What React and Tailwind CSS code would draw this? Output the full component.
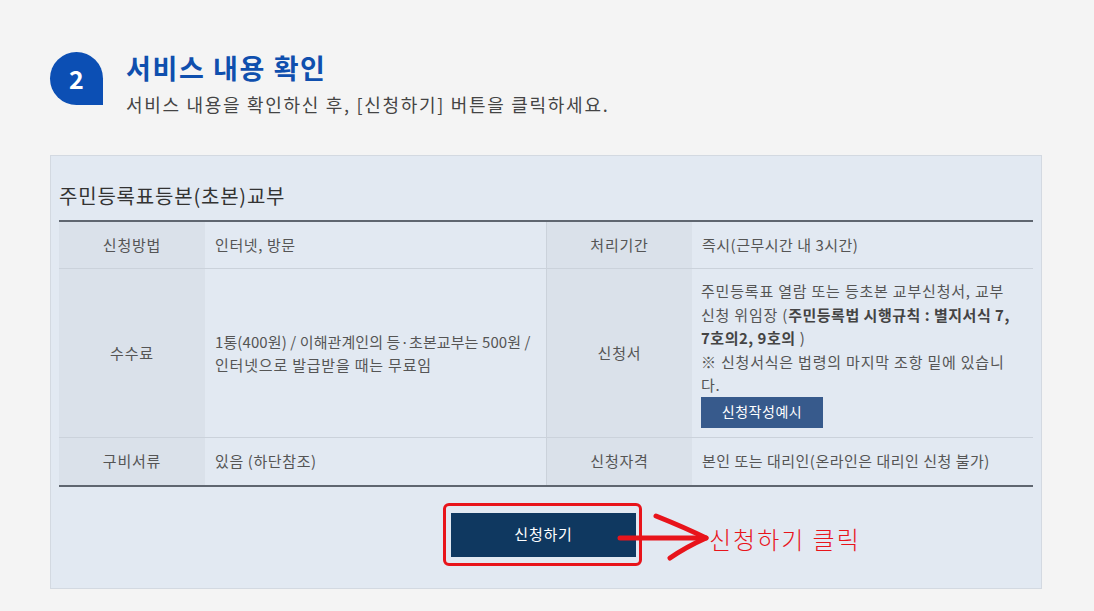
import React from "react";

const KR = { fontFamily: '"Noto Sans CJK KR", "Noto Sans", sans-serif' };

const Label = ({ children, className = "" }) => (
  <div className={`flex items-center justify-center bg-[#dae1ea] text-[15px] tracking-[0.8px] text-[#555] ${className}`}>
    {children}
  </div>
);

const Value = ({ children, className = "" }) => (
  <div className={`flex items-center px-[10px] text-[15px] text-[#555] ${className}`}>
    {children}
  </div>
);

export default function App() {
  return (
    <div className="min-h-[611px] w-full bg-[#f4f4f4] pt-[51px] pl-[50px]" style={KR}>
      {/* step header */}
      <div className="flex items-start">
        <div className="mt-[1px] flex h-[53px] w-[53px] items-center justify-center rounded-tl-[27px] rounded-tr-[27px] rounded-bl-[27px] bg-[#0c4fb4] text-[25px] font-bold text-white">
          2
        </div>
        <div className="ml-[23px]">
          <div className="text-[27px] font-bold leading-[34px] tracking-[1.6px] text-[#0f4fae]">서비스 내용 확인</div>
          <div className="mt-[7px] text-[18px] leading-[24px] tracking-[1.7px] text-[#444]">
            서비스 내용을 확인하신 후, [신청하기] 버튼을 클릭하세요.
          </div>
        </div>
      </div>

      {/* service card */}
      <div className="mt-[39px] w-[992px] border border-[#d3d9e1] bg-[#e2e9f2] px-[8px] pt-[26px] pb-[31px]">
        <div className="mb-[10px] text-[20px] leading-[28px] tracking-[0.8px] text-[#333]">주민등록표등본(초본)교부</div>

        <div className="grid grid-cols-[146px_342px_145px_341px] border-t-2 border-b-2 border-[#5f6670]">
          {/* row 1 */}
          <Label className="h-[47px] border-b border-[#cbd2db]">신청방법</Label>
          <Value className="border-b border-r border-[#cbd2db] tracking-[0.6px]">인터넷, 방문</Value>
          <Label className="border-b border-[#cbd2db]">처리기간</Label>
          <Value className="border-b border-[#cbd2db] tracking-[0.5px]">즉시(근무시간 내 3시간)</Value>

          {/* row 2 */}
          <Label className="border-b border-[#cbd2db]">수수료</Label>
          <Value className="border-b border-r border-[#cbd2db] leading-[23px] tracking-[0.1px]">
            <span className="whitespace-nowrap">
              1통(400원) / 이해관계인의 등·초본교부는 500원 /
              <br />
              <span className="tracking-[0.8px]">인터넷으로 발급받을 때는 무료임</span>
            </span>
          </Value>
          <Label className="border-b border-[#cbd2db]">신청서</Label>
          <div className="border-b border-[#cbd2db] px-[9px] pt-[10px] pb-[9px] text-[15px] leading-[23.5px] tracking-[0.8px] text-[#555]">
            <div className="whitespace-nowrap">
              주민등록표 열람 또는 등초본 교부신청서, 교부
              <br />
              신청 위임장 (<b className="tracking-[0.5px] text-[#444]">주민등록법 시행규칙 : 별지서식 7,</b>
              <br />
              <b className="tracking-[0.5px] text-[#444]">7호의2, 9호의</b> )
              <br />
              ※ 신청서식은 법령의 마지막 조항 밑에 있습니
              <br />
              다.
            </div>
            <button className="h-[31px] w-[122px] bg-[#375a8c] text-[14px] tracking-[0.5px] text-white">신청작성예시</button>
          </div>

          {/* row 3 */}
          <Label className="h-[47px]">구비서류</Label>
          <Value className="border-r border-[#cbd2db] tracking-[0.6px]">있음 (하단참조)</Value>
          <Label>신청자격</Label>
          <Value className="tracking-[0.5px]">본인 또는 대리인(온라인은 대리인 신청 불가)</Value>
        </div>

        <div className="mt-[26px] flex justify-center pr-[5px]">
          <div className="relative">
            <button className="h-[44px] w-[185px] bg-[#0f3860] text-[15px] tracking-[0.8px] text-white">신청하기</button>
            {/* red annotation */}
            <div className="pointer-events-none absolute left-[-8px] top-[-10px] h-[63px] w-[199px] rounded-[6px] border-[3px] border-[#e8141b]" />
            <svg className="absolute left-[165px] top-[0px]" width="100" height="50" viewBox="0 0 100 50">
              <path d="M4 25 L90 25" stroke="#e8141b" strokeWidth="5" strokeLinecap="round" fill="none" />
              <path d="M40 3 Q70 15 90 25 Q70 34 54 45" stroke="#e8141b" strokeWidth="5" strokeLinecap="round" strokeLinejoin="round" fill="none" />
            </svg>
            <div className="absolute left-[258px] top-[11px] whitespace-nowrap text-[24px] font-light leading-[30px] tracking-[2px] text-[#e8141b]">
              신청하기 클릭
            </div>
          </div>
        </div>
      </div>
    </div>
  );
}
